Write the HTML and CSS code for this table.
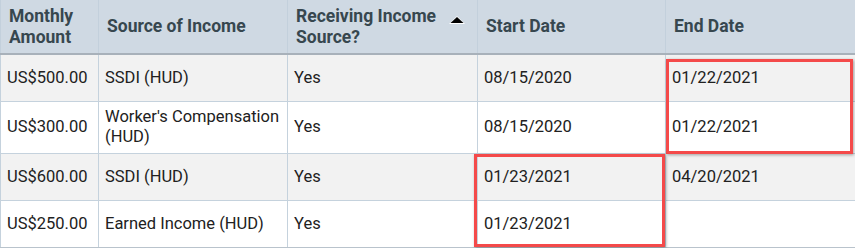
FILE: index.html
```html
<!DOCTYPE html>
<html>
<head>
<meta charset="utf-8">
<link rel="stylesheet" href="styles.css">
</head>
<body>
<div class="wrap">
  <table class="grid">
    <colgroup>
      <col class="c1"><col class="c2"><col class="c3"><col class="c4"><col class="c5">
    </colgroup>
    <thead>
      <tr>
        <th>Monthly<br>Amount</th>
        <th>Source of Income</th>
        <th>
          <div class="sorth">
            <span>Receiving Income<br>Source?</span>
            <svg class="sort" width="20" height="12" viewBox="0 0 20 12"><polygon points="2,10 10,2 18,10" fill="#fff"/><polygon points="3.5,9 10,3 16.5,9" fill="#000"/></svg>
          </div>
        </th>
        <th>Start Date</th>
        <th>End Date</th>
      </tr>
    </thead>
    <tbody>
      <tr class="alt">
        <td>US$500.00</td><td>SSDI (HUD)</td><td>Yes</td><td>08/15/2020</td><td>01/22/2021</td>
      </tr>
      <tr class="two">
        <td>US$300.00</td><td>Worker's Compensation (HUD)</td><td>Yes</td><td>08/15/2020</td><td>01/22/2021</td>
      </tr>
      <tr class="alt">
        <td>US$600.00</td><td>SSDI (HUD)</td><td>Yes</td><td>01/23/2021</td><td>04/20/2021</td>
      </tr>
      <tr>
        <td>US$250.00</td><td>Earned Income (HUD)</td><td>Yes</td><td>01/23/2021</td><td></td>
      </tr>
    </tbody>
  </table>
  <div class="mark mark-end"></div>
  <div class="mark mark-start"></div>
</div>
</body>
</html>
```

FILE: styles.css
```css
html, body {
  margin: 0;
  padding: 0;
  background: #fff;
}
.wrap {
  position: relative;
  width: 856px;
}
.grid {
  border-collapse: collapse;
  table-layout: fixed;
  width: 856px;
  font-family: Roboto, "Liberation Sans", sans-serif;
  font-size: 16.5px;
  color: #212121;
}
.c1 { width: 98px; }
.c2 { width: 189px; }
.c3 { width: 190px; }
.c4 { width: 188px; }
.c5 { width: 191px; }
.grid th {
  background: #cfd9e3;
  color: #37474f;
  font-weight: bold;
  font-size: 17.5px;
  text-align: left;
  vertical-align: middle;
  line-height: 21px;
  height: 54px;
  padding: 0 8px 0 8px;
  border-left: 1px solid #c3d0dc;
  border-bottom: 2px solid #a8b1ba;
  box-sizing: border-box;
}
.sorth {
  display: flex;
  align-items: center;
  justify-content: space-between;
}
.sort {
  margin-right: 2px;
  margin-top: -14px;
  flex: none;
}
.grid td {
  line-height: 20px;
  height: 47px;
  padding: 4px 6px;
  border: 1px solid #c5d2dd;
  box-sizing: border-box;
  vertical-align: middle;
}
.grid tr.two td {
  padding: 5px 6px 6px;
}
.grid tbody tr:last-child td {
  border-bottom: 1px solid #b9c3cc;
}
.grid tr.alt td {
  background: #f2f2f2;
}
.mark {
  position: absolute;
  border: 3px solid #f44a4a;
  box-shadow: 1px 1px 3px rgba(0,0,0,0.35);
  box-sizing: border-box;
}
.mark-end {
  left: 666px;
  top: 59px;
  width: 187px;
  height: 95px;
}
.mark-start {
  left: 474px;
  top: 154px;
  width: 191px;
  height: 93px;
}
```
